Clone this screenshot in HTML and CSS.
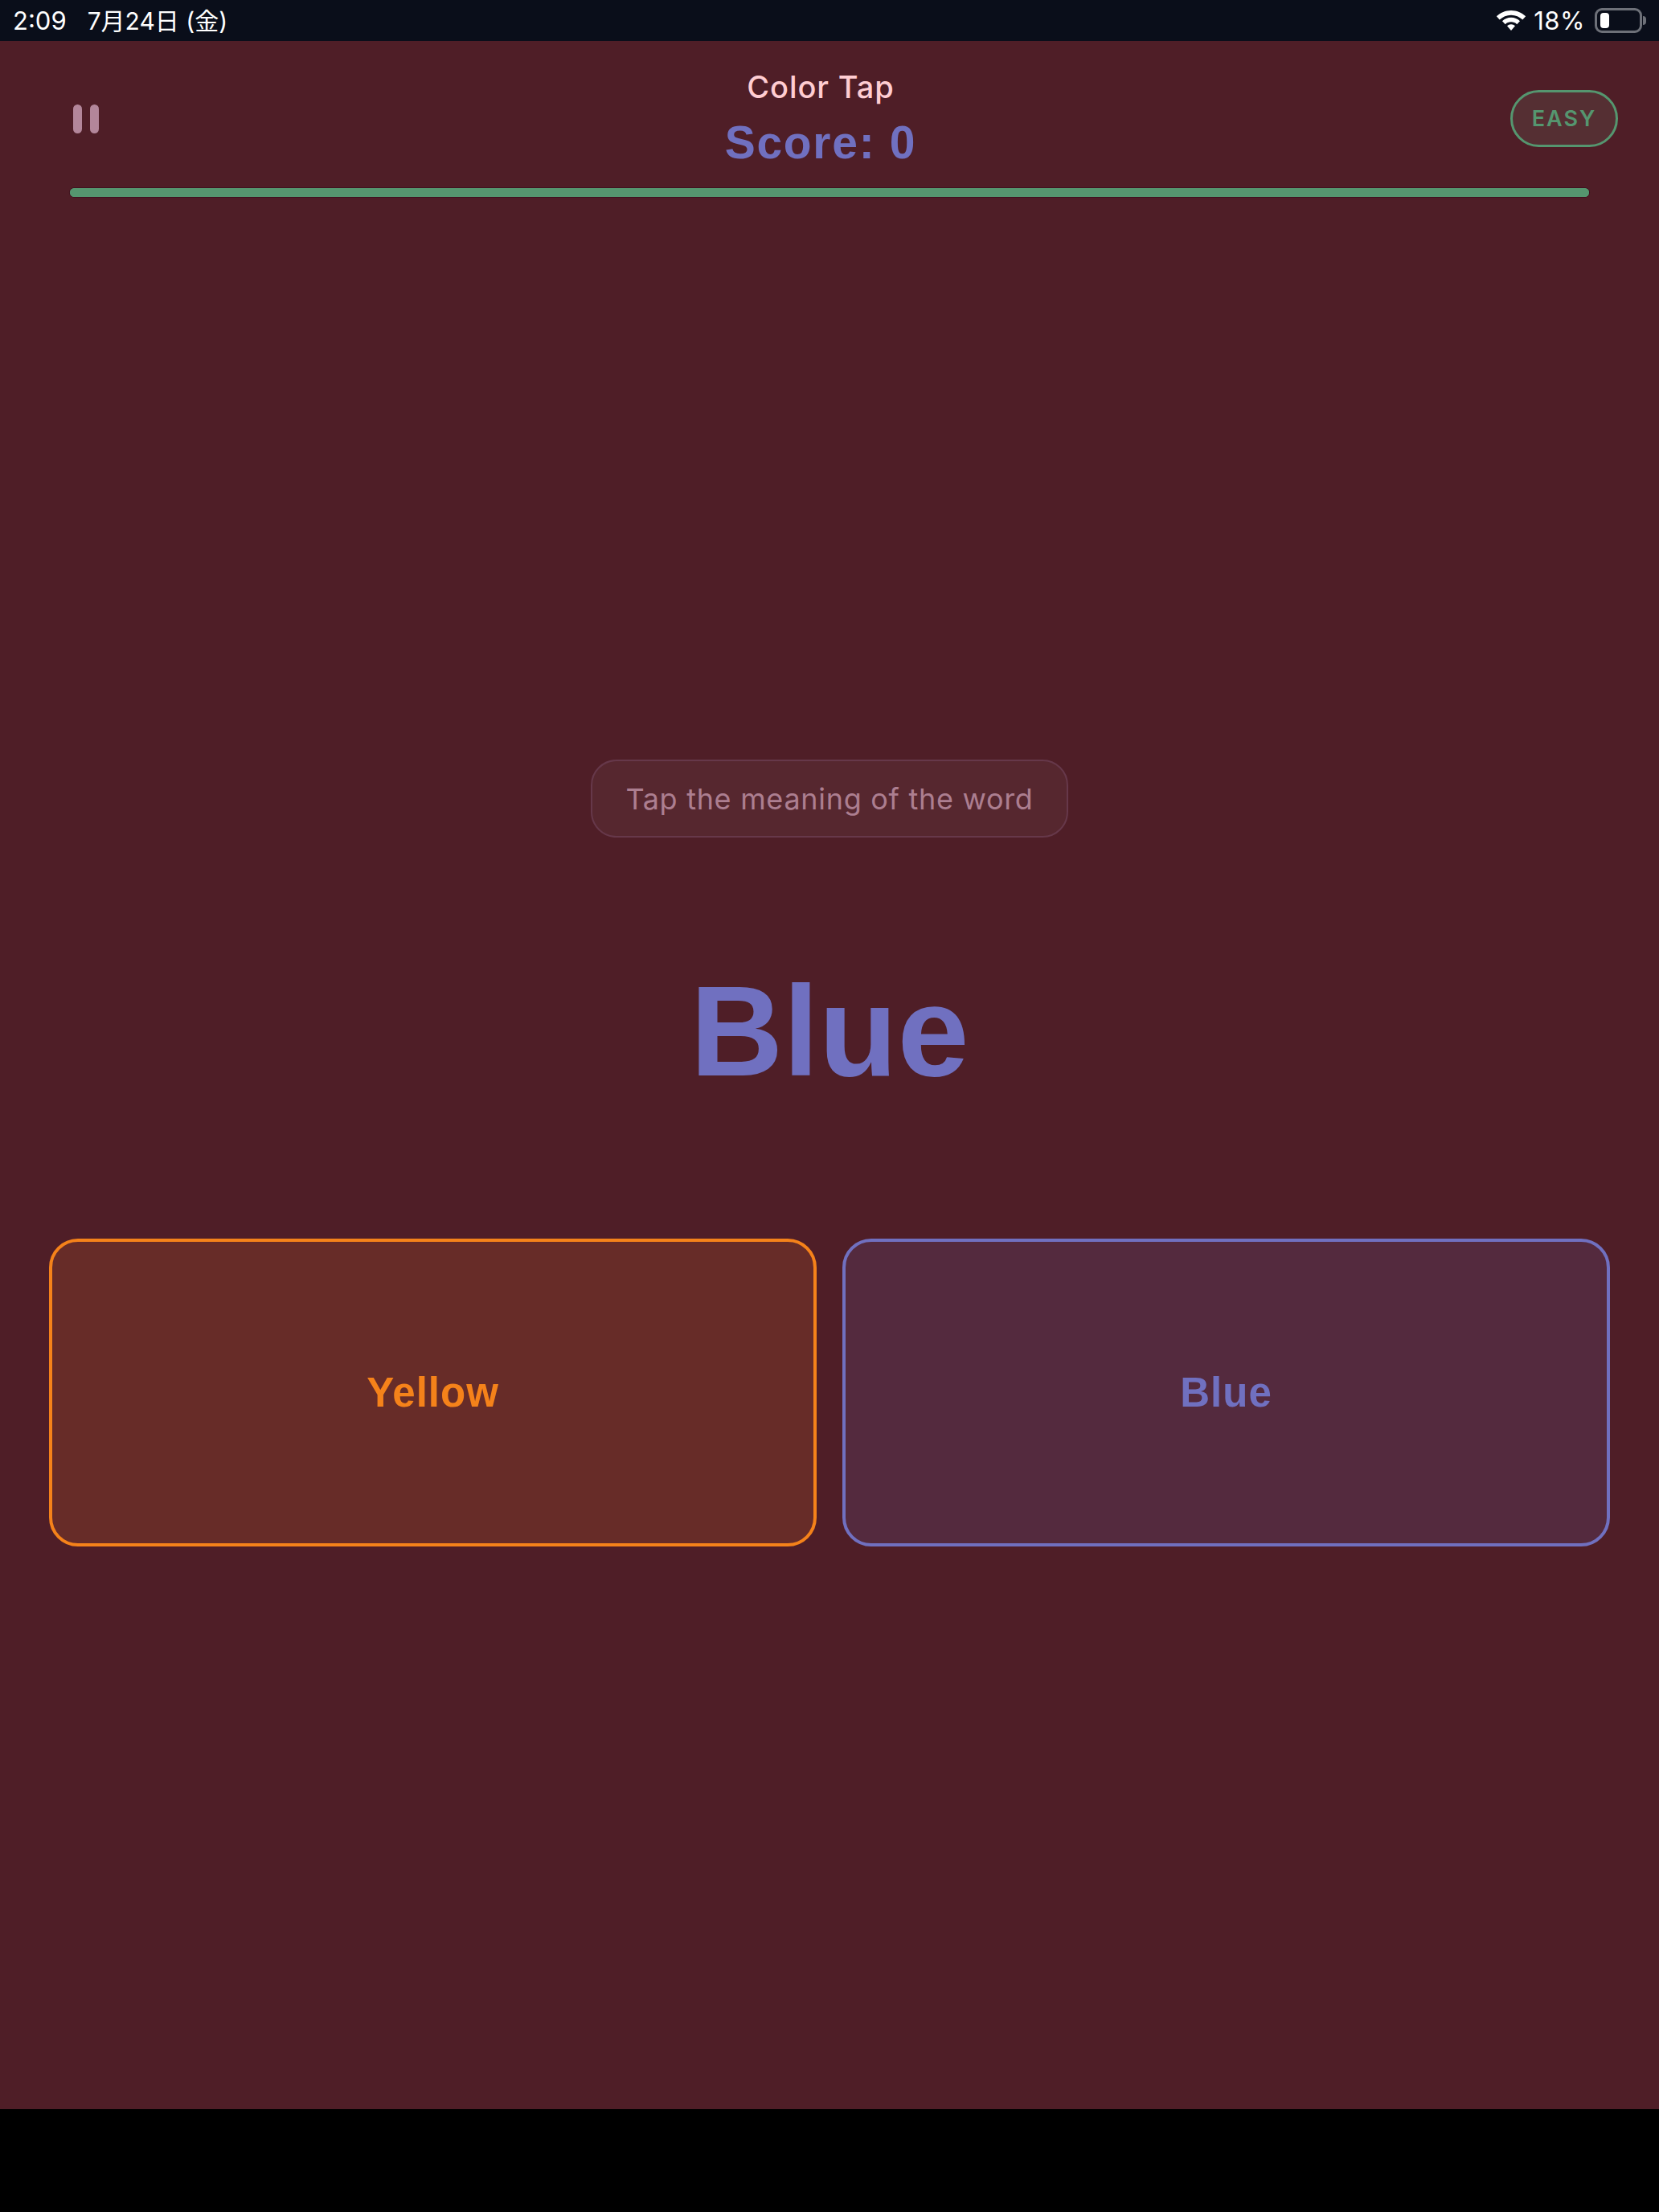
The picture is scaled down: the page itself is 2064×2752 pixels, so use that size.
FILE: index.html
```html
<!DOCTYPE html>
<html lang="en">
<head>
<meta charset="utf-8">
<title>Color Tap</title>
<link rel="stylesheet" href="styles.css">
</head>
<body>
<div class="status-bar">
  <div class="status-left"><span>2:09</span><span class="status-date" lang="ja">7月24日 (金)</span></div>
  <div class="status-right">
    <svg class="wifi" viewBox="0 0 36 26" aria-hidden="true">
      <path d="M18 1C11.200 1 5.200 3.600 .5 8L4.200 12C8 8.600 12.700 6.400 18 6.400S28 8.600 31.800 12L35.500 8C30.800 3.600 24.800 1 18 1Z"/>
      <path d="M18 9.500C13.900 9.500 10.200 11.100 7.400 13.700L11 17.500C12.900 15.800 15.300 14.800 18 14.800S23.100 15.800 25 17.500L28.600 13.700C25.800 11.100 22.100 9.500 18 9.500Z"/>
      <path d="M18 17.500C16.100 17.500 14.500 18.200 13.200 19.400L18 25L22.800 19.400C21.500 18.200 19.900 17.500 18 17.500Z"/>
    </svg>
    <span class="battery-pct">18%</span>
    <div class="battery"><div class="battery-body"><div class="battery-level"></div></div><div class="battery-nub"></div></div>
  </div>
</div>
<div class="app">
  <header class="header">
    <div class="header-row">
      <div class="pause"><span></span><span></span></div>
      <div class="titles">
        <div class="title">Color Tap</div>
        <div class="score">Score: 0</div>
      </div>
      <div class="badge">EASY</div>
    </div>
    <div class="progress"><div class="progress-fill"></div></div>
  </header>
  <main class="game">
    <div class="hint">Tap the meaning of the word</div>
    <div class="word">Blue</div>
    <div class="choices">
      <div class="choice choice-orange">Yellow</div>
      <div class="choice choice-blue">Blue</div>
    </div>
  </main>
</div>
<div class="home-area"></div>
</body>
</html>
```
FILE: styles.css
```css
* { box-sizing: border-box; }
html, body { margin: 0; padding: 0; }
body {
  width: 2064px;
  height: 2752px;
  background: #000;
  display: flex;
  flex-direction: column;
  font-family: Inter, "Noto Sans CJK JP", sans-serif;
  overflow: hidden;
}
.status-bar {
  height: 51px;
  flex: none;
  background: #0a0e1a;
  color: #fff;
  display: flex;
  justify-content: space-between;
  align-items: center;
  padding: 0 16px;
  font-size: 31px;
  line-height: 36px;
}
.status-left { display: flex; align-items: baseline; gap: 26px; }
.status-date { font-size: 30px; }
.status-right { display: flex; align-items: center; }
.wifi { width: 38px; height: 27px; fill: #fff; margin-right: 9px; }
.battery-pct { margin-right: 12px; letter-spacing: .5px; }
.battery { display: flex; align-items: center; }
.battery-body {
  width: 59px;
  height: 31px;
  border: 3px solid #6d7078;
  border-radius: 9px;
  padding: 3px 4px;
}
.battery-level { width: 11px; height: 100%; background: #fff; border-radius: 4px; }
.battery-nub { width: 4px; height: 11px; background: #6d7078; border-radius: 0 4px 4px 0; margin-left: 1px; }
.app {
  height: 2573px;
  flex: none;
  background: #4f1e27;
  display: flex;
  flex-direction: column;
}
.header { padding: 0 51px; flex: none; }
.header-row { display: flex; justify-content: space-between; align-items: flex-start; }
.pause {
  width: 112px;
  height: 36px;
  margin-top: 79px;
  display: flex;
  justify-content: center;
  gap: 10px;
}
.pause span { width: 11px; height: 36px; background: #b3869a; border-radius: 6px; }
.titles { display: flex; flex-direction: column; align-items: center; padding-top: 35px; }
.title { font-size: 38px; line-height: 44px; font-weight: 500; color: #ffcdd2; letter-spacing: .9px; }
.score { font-family: "Liberation Sans", sans-serif; font-size: 57px; line-height: 68px; font-weight: 700; color: #7070c0; letter-spacing: 1.700px; margin-top: 13px; }
.badge {
  width: 134px;
  height: 71px;
  margin-top: 61px;
  border: 3px solid #55966f;
  border-radius: 36px;
  background: #552f33;
  color: #55966f;
  font-size: 27px;
  font-weight: 600;
  letter-spacing: 2px;
  display: flex;
  align-items: center;
  justify-content: center;
}
.progress {
  margin: 23px 36px 0;
  height: 11px;
  border-radius: 6px;
  background: #55966f;
  box-shadow: 0 0 0 1px #3f111f;
}
.progress-fill { width: 100%; height: 100%; border-radius: 6px; background: #55966f; }
.game {
  flex: 1;
  display: flex;
  flex-direction: column;
  align-items: center;
  justify-content: center;
  padding-bottom: 1px;
}
.hint {
  width: 594px;
  height: 97px;
  padding-top: 1px;
  border: 2px solid #66384a;
  border-radius: 32px;
  background: #56272f;
  color: #ac7e90;
  font-size: 36px;
  letter-spacing: .7px;
  display: flex;
  align-items: center;
  justify-content: center;
}
.word {
  font-family: "Liberation Sans", sans-serif;
  font-size: 160px;
  line-height: 192px;
  font-weight: 700;
  color: #7070c0;
  margin: 145px 0 162px;
}
.choices { align-self: stretch; display: flex; gap: 32px; padding: 0 61px; }
.choice {
  flex: 1;
  height: 383px;
  border: 4px solid;
  border-radius: 36px;
  font-family: "Liberation Sans", sans-serif;
  font-size: 51px;
  font-weight: 700;
  letter-spacing: 1px;
  display: flex;
  align-items: center;
  justify-content: center;
}
.choice-orange { border-color: #f5821a; color: #f5821a; background: #672c28; }
.choice-blue { border-color: #7070c0; color: #7070c0; background: #542a3e; }
.home-area { flex: 1; background: #000; }
```
